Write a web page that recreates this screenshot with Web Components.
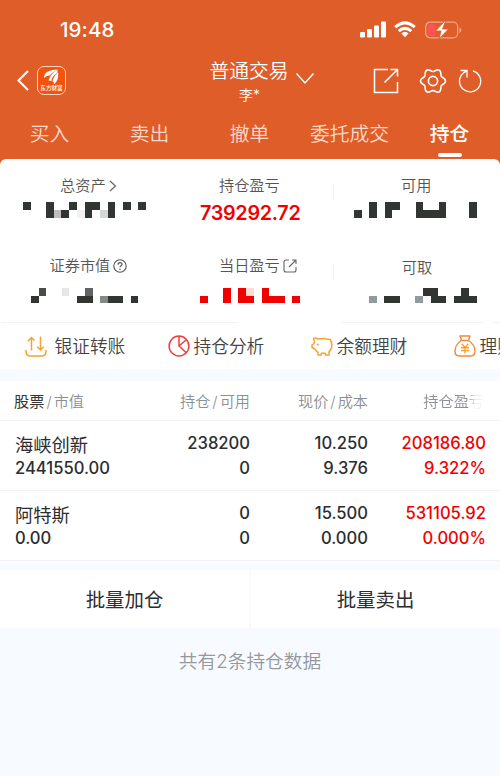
<!DOCTYPE html>
<html lang="zh-CN">
<head>
<meta charset="UTF-8">
<title>普通交易</title>
<style>
  html, body {
    margin: 0;
    height: 100%;
    background: #f7faff;
    overflow: hidden;
    font-family: Inter, 'Noto Sans CJK SC', sans-serif;
    color: #333;
  }
</style>
</head>
<body>
<trade-page></trade-page>

<script>
// six-lobed gear outline around (cx, cy)
function gearPath(cx, cy) {
  let d = '';
  for (let a = 0; a < 360; a += 6) {
    const t = a * Math.PI / 180;
    const r = 11 + 1.5 * Math.cos(6 * t);
    d += `${a ? 'L' : 'M'}${(cx + r * Math.cos(t)).toFixed(2)} ${(cy + r * Math.sin(t)).toFixed(2)}`;
  }
  return d + 'Z';
}

const ICONS = {
  back: [12, 22, '<path d="M11 1 1.500 10.500l9.500 9.500" stroke="#fff" stroke-width="2.200"/>'],
  down: [20, 13, '<path d="M1.500 1.500 10 11l8.500-9.500" stroke="#fff" stroke-width="1.400"/>'],
  share: [26, 26, '<path d="M15 1.500H1.500v23h23V14M11.500 14.500 24 2M17.500 1.500h7v7" stroke="#fff" stroke-width="1.500"/>'],
  gear: [28, 26, `<path d="${gearPath(14, 13)}" stroke="#fff" stroke-width="1.600" stroke-linejoin="round"/><circle cx="14" cy="13" r="4.600" stroke="#fff" stroke-width="1.600"/>`],
  refresh: [24, 24, '<path d="M15 2A10.600 10.600 0 1 1 5.500 3.900L9 1.700M2.500 1.500H9v7" stroke="#fff" stroke-width="1.300"/>'],
  signal: [26, 17, '<g fill="#fff"><rect y="11" width="5" height="5.500" rx="1"/><rect x="7" y="8" width="5" height="8.500" rx="1"/><rect x="14" y="4.500" width="5" height="12" rx="1"/><rect x="21" y=".5" width="5" height="16" rx="1"/></g>'],
  wifi: [22, 17, '<g stroke="#fff" stroke-width="3"><path d="M1.200 6.200Q11-2.500 20.800 6.200"/><path d="M4.700 10.200Q11 4.500 17.300 10.200"/></g><path d="M7.400 12.400Q11 9.300 14.600 12.400L11 16.200Z" fill="#fff"/>'],
  battery: [37, 18, '<rect x=".7" y="1.200" width="32" height="15.600" rx="4.500" stroke="#f0a98c" stroke-width="1.200"/><path d="M34.500 6.500v5.500q1.800-.8 1.800-2.750t-1.800-2.750" fill="#f0a98c"/><rect x="2.500" y="3" width="8" height="12" rx="2.500" fill="#ff5257"/><path d="M19.500.5 10.500 10h5.500l-2 8 9.500-10H17.500l3-7.500Z" fill="#fff" stroke="#de5d28" stroke-width=".9"/>'],
  more: [8, 12, '<path d="m1 1 5.500 5L1 11" stroke="#666" stroke-width="1.200"/>'],
  help: [14, 14, '<circle cx="7" cy="7" r="6.200" stroke="#555" stroke-width="1.100"/><path d="M5 5.700C5 3 9 3.100 9 5.300 9 6.800 7 6.700 7 8.300M7 9.700v1.200" stroke="#555" stroke-width="1.200"/>'],
  open: [14, 14, '<path d="M6 1H3Q1 1 1 3v8q0 2 2 2h8q2 0 2-2V8M6 8l6.500-6.500M9 1h4v4" stroke="#666" stroke-width="1.100"/>'],
  transfer: [22, 21, '<g stroke="#f9a12f" stroke-width="1.500"><path d="M1 14v1.500Q1 20 5.500 20h11Q21 20 21 15.500V14"/><path d="M6.500 14.500V1.500M2.800 5.200 6.500 1.500l3 3M15.500.5v13.500M12.300 10.800l3.200 3.200 3.200-3.200"/></g>'],
  pie: [22, 22, '<g stroke="#f03d3d" stroke-width="1.500"><circle cx="11" cy="11" r="9.900"/><path d="M11 1v10l7.500 7M11 11l7-6"/></g>'],
  pig: [22, 20, '<path d="M2.500 2.500Q5 1.500 7 3Q12 1.800 16 3L19.200 3.500Q21.500 7 20.500 12L18 16v3h-3.500l-.5-1.800h-3.500L10 19H7v-2.800Q4.500 15 3.800 13L1 11.500V9L3 7.500Q4 6 2.500 2.500Z" stroke="#f9a12f" stroke-width="1.500" stroke-linejoin="round"/><circle cx="6.800" cy="8.500" r="1" fill="#f9a12f"/>'],
  bag: [22, 22, '<g stroke="#f28a35" stroke-width="1.400" stroke-linejoin="round"><path d="M6 1h10l-1.500 4.500h-7ZM7.500 5.500Q1 9.500 1 16.500 1 21 5.500 21h11Q21 21 21 16.500 21 9.500 14.500 5.500Z"/><path d="m7.800 9 3.200 3.500L14.200 9M11 12.500V18.500M7 12.800h8M7 15.600h8" stroke="#f9a12f"/></g>']
};

// one svg glyph by name
class AppIcon extends HTMLElement {
  connectedCallback() {
    const [w, h, body] = ICONS[this.getAttribute('name')];
    this.attachShadow({ mode: 'open' }).innerHTML = `
      <style>
        :host { display: inline-block; flex: none; width: ${w}px; height: ${h}px; }
        svg { display: block; }
      </style>
      <svg width="${w}" height="${h}" viewBox="0 0 ${w} ${h}" fill="none">${body}</svg>`;
  }
}

// square orange brand badge
class BrandLogo extends HTMLElement {
  constructor() {
    super();
    this.attachShadow({ mode: 'open' }).innerHTML = `
      <style>
        :host {
          display: flex; flex-direction: column; align-items: center;
          box-sizing: border-box; width: 29px; height: 29px;
          border: 1px solid #ffd9c8; border-radius: 7px; background: #f4520f;
          color: #fff; overflow: hidden;
        }
        svg { display: block; margin-top: 2px; flex: none; }
        span { font: 500 5.600px/7px 'Noto Sans CJK SC', sans-serif; white-space: nowrap; }
      </style>
      <svg width="17" height="16" viewBox="0 0 17 16" fill="#fff">
        <path d="M1 9Q1 4 5 2.500 9 .5 15 .5 8 4 7 6.500 3.500 6 1 9Z"/>
        <path d="M5.500 11.500Q8 4 14.500 1 15.500 3 11 6.500 8.500 8.500 8.500 12Z"/>
        <path d="M9.500 12.500Q10 8 15 3 16.500 10 11 15.500 11.500 13 9.500 12.500Z"/>
      </svg>
      <span>东方财富</span>`;
  }
}

class StatusBar extends HTMLElement {
  constructor() {
    super();
    this.attachShadow({ mode: 'open' }).innerHTML = `
      <style>
        :host { display: flex; align-items: center; height: 60px; padding: 0 38px 0 60px; color: #fff; }
        time { flex: 1; font-size: 20.500px; font-weight: 500; line-height: 24px; letter-spacing: .1px; }
        .icons { display: flex; align-items: center; gap: 8px; padding-bottom: 1px; }
        app-icon:last-child { margin-left: 1px; }
      </style>
      <time>19:48</time>
      <div class="icons">
        <app-icon name="signal"></app-icon>
        <app-icon name="wifi"></app-icon>
        <app-icon name="battery"></app-icon>
      </div>`;
  }
}

class NavHeader extends HTMLElement {
  constructor() {
    super();
    this.attachShadow({ mode: 'open' }).innerHTML = `
      <style>
        :host {
          display: grid; grid-template-columns: 1fr auto 1fr; height: 50px;
          padding: 0 18px 0 17px; color: #fff;
        }
        .side { display: flex; align-items: center; height: 41px; }
        .left { gap: 8px; }
        .right { justify-content: flex-end; }
        .right app-icon:nth-child(1) { margin-right: 20px; }
        .right app-icon:nth-child(2) { margin-right: 11px; }
        .title { display: flex; align-items: center; gap: 6px; height: 22px; font-size: 19.800px; line-height: 24px; margin-left: 25px; }
        .title app-icon { margin-top: 14px; }
        .mid { font-weight: 350; }
        .user { font-size: 14px; line-height: 20px; margin-top: 3px; text-align: center; }
      </style>
      <div class="side left"><app-icon name="back"></app-icon><brand-logo></brand-logo></div>
      <div class="mid">
        <div class="title"><span>普通交易</span><app-icon name="down"></app-icon></div>
        <div class="user">李*</div>
      </div>
      <div class="side right">
        <app-icon name="share"></app-icon>
        <app-icon name="gear"></app-icon>
        <app-icon name="refresh"></app-icon>
      </div>`;
  }
}

class TabItem extends HTMLElement {
  constructor() {
    super();
    this.attachShadow({ mode: 'open' }).innerHTML = `
      <style>
        :host {
          display: flex; flex-direction: column; align-items: center;
          width: 100px; color: #ffd9c8; font-size: 19.800px; font-weight: 350; line-height: 28px;
        }
        :host([active]) { color: #fff; font-weight: 500; }
        i { display: none; width: 24px; height: 4px; margin-top: 5px; border-radius: 2px; background: #fff; }
        :host([active]) i { display: block; }
      </style>
      <slot></slot><i></i>`;
  }
}

class TabBar extends HTMLElement {
  constructor() {
    super();
    this.attachShadow({ mode: 'open' }).innerHTML = `
      <style>
        :host { display: flex; height: 39px; padding-top: 10px; margin-left: -.5px; }
      </style>
      <slot></slot>`;
  }
}

// two-row block mask hiding a value; each character is one cell
const MASK_COLORS = { '#': '#323633', a: '#4a4d4a', b: '#5f6462', c: '#858884', d: '#bfbdc0', e: '#d6d6d6', f: '#f5f0f3', g: '#e6e6e6', h: '#939a9d', r: '#f20000', p: '#ffdcd2' };

class PixelMask extends HTMLElement {
  connectedCallback() {
    const cell = 7.69;
    const h = Number(this.getAttribute('cell-height')) || 8;
    const rows = [this.getAttribute('upper'), this.getAttribute('lower')];
    let rects = '';
    rows.forEach((row, y) => {
      [...row].forEach((c, x) => {
        if (MASK_COLORS[c]) rects += `<rect x="${x * cell}" y="${y * h}" width="${cell}" height="${h}" fill="${MASK_COLORS[c]}"/>`;
      });
    });
    const w = Math.max(rows[0].length, rows[1].length) * cell;
    this.attachShadow({ mode: 'open' }).innerHTML = `
      <style>:host { display: block; } svg { display: block; }</style>
      <svg width="${w}" height="${h * 2}" shape-rendering="crispEdges">${rects}</svg>`;
  }
}

class StatCell extends HTMLElement {
  constructor() {
    super();
    this.attachShadow({ mode: 'open' }).innerHTML = `
      <style>
        :host { display: block; min-width: 0; }
        .label {
          display: flex; align-items: center; gap: 3px; box-sizing: border-box; height: 22px;
          padding-left: var(--label-x); padding-top: 2px;
          font-size: 15.200px; font-weight: 350; line-height: 22px; color: #555; white-space: nowrap;
        }
        .value { padding-left: var(--value-x); margin-top: var(--value-y, 6px); }
      </style>
      <div class="label"><slot name="label"></slot></div>
      <div class="value"><slot></slot></div>`;
  }
}

class AssetPanel extends HTMLElement {
  constructor() {
    super();
    this.attachShadow({ mode: 'open' }).innerHTML = `
      <style>
        :host { display: block; box-sizing: border-box; height: 164px; padding-top: 15px; background:
          linear-gradient(#f3f3f3, #f3f3f3) 1px 163px / 237px 1px no-repeat,
          linear-gradient(#f3f3f3, #f3f3f3) 342px 163px / 142px 1px no-repeat,
          linear-gradient(#f3f3f3, #f3f3f3) 492px 163px / 8px 1px no-repeat, #fff;
          border-radius: 6px 6px 0 0; }
        .row { display: grid; grid-template-columns: repeat(3, 1fr); height: 80px;
          background: linear-gradient(#f4f4f4, #f4f4f4) 333px 9px / 1px 17px no-repeat; }
        .low { padding-top: 2px; }
        b { display: block; font-size: 19.800px; font-weight: 600; line-height: 24px; letter-spacing: -.3px; color: #f20000; }
      </style>
      <div class="row">
        <stat-cell style="--label-x:60px; --value-x:23.070px">
          <span slot="label">总资产</span><app-icon slot="label" name="more"></app-icon>
          <pixel-mask upper="#..#..#.##.#.#.#" lower="...#d#.f#.e#"></pixel-mask>
        </stat-cell>
        <stat-cell style="--label-x:52.300px; --value-x:33.300px; --value-y:5px">
          <span slot="label">持仓盈亏</span><b>739292.72</b>
        </stat-cell>
        <stat-cell style="--label-x:67.700px; --value-x:20.500px">
          <span slot="label">可用</span>
          <pixel-mask upper="..#.##..#..#...#" lower="#.#.#...####...#" ></pixel-mask>
        </stat-cell>
      </div>
      <div class="row">
        <stat-cell style="--label-x:49.500px; --value-x:30.800px; --value-y:12px">
          <span slot="label">证券市值</span><app-icon slot="label" name="help"></app-icon>
          <pixel-mask cell-height="7.500" upper=".a..g..b" lower="#.....##.c##.#"></pixel-mask>
        </stat-cell>
        <stat-cell style="--label-x:52.300px; --value-x:33.300px; --value-y:12px">
          <span slot="label">当日盈亏</span><app-icon slot="label" name="open"></app-icon>
          <pixel-mask cell-height="7.500" upper="...r.rp.r" lower="r..r.rr.rrr.r"></pixel-mask>
        </stat-cell>
        <stat-cell class="low" style="--label-x:68.500px; --value-x:35.800px; --value-y:10px">
          <span slot="label">可取</span>
          <pixel-mask cell-height="7.500" upper=".......##...#" lower="h.##..h.##.###"></pixel-mask>
        </stat-cell>
      </div>`;
  }
}

class ToolLink extends HTMLElement {
  constructor() {
    super();
    this.attachShadow({ mode: 'open' }).innerHTML = `
      <style>
        :host {
          display: flex; flex: none; align-items: center; gap: var(--gap, 4px); width: 143px;
          font-size: 17.700px; font-weight: 350; line-height: 26px; color: #444; white-space: nowrap;
        }
        span { padding-top: 2px; }
      </style>
      <app-icon name="${this.getAttribute('icon')}"></app-icon><span><slot></slot></span>`;
  }
}

class ToolStrip extends HTMLElement {
  constructor() {
    super();
    this.attachShadow({ mode: 'open' }).innerHTML = `
      <style>
        :host { display: flex; height: 46px; padding-left: 24.500px; background: #fff; overflow: hidden; }
      </style>
      <slot></slot>`;
  }
}

class HoldingRow extends HTMLElement {
  constructor() {
    super();
    const cells = ['qty', 'avail', 'price', 'cost', 'gain', 'rate'].map(k => this.getAttribute(k));
    this.attachShadow({ mode: 'open' }).innerHTML = `
      <style>
        :host {
          display: grid; grid-template-columns: 135px 100px 118px 118px;
          box-sizing: border-box; height: 70px; padding: 10px 14px 0 15px;
          background: #fff; border-bottom: 1px solid #f3f3f3;
          font-size: 16.600px; font-weight: 500; line-height: 24.500px; color: #2b2d30;
        }
        .name { font-size: 18.300px; font-weight: 400; height: 24.500px; line-height: 28px; }
        .num { text-align: right; }
        .up { color: #f20000; }
      </style>
      <div><div class="name"><slot></slot></div>${this.getAttribute('value')}</div>
      <div class="num">${cells[0]}<br>${cells[1]}</div>
      <div class="num">${cells[2]}<br>${cells[3]}</div>
      <div class="num up">${cells[4]}<br>${cells[5]}</div>`;
  }
}

class HoldingTable extends HTMLElement {
  constructor() {
    super();
    this.attachShadow({ mode: 'open' }).innerHTML = `
      <style>
        :host { display: block; margin-top: 12px; }
        .head {
          display: grid; grid-template-columns: 136px 100px 118px 116px;
          box-sizing: border-box; height: 40px; padding: 0 14px;
          background: #fff; border-bottom: 1px solid #f3f3f3;
          font-size: 15.200px; font-weight: 350; line-height: 41px; color: #8c8f94; white-space: nowrap;
        }
        .head div + div { text-align: right; }
        b { font-weight: 400; color: #333; }
        i { font-style: normal; margin: 0 2px; }
        .fade { -webkit-mask-image: linear-gradient(90deg, #000 100px, rgba(0, 0, 0, .2) 107px, transparent 120px); mask-image: linear-gradient(90deg, #000 100px, rgba(0, 0, 0, .2) 107px, transparent 120px); }
      </style>
      <div class="head">
        <div><b>股票</b><i>/</i>市值</div>
        <div>持仓<i>/</i>可用</div>
        <div>现价<i>/</i>成本</div>
        <div class="fade">持仓盈亏</div>
      </div>
      <slot></slot>`;
  }
}

class BatchActions extends HTMLElement {
  constructor() {
    super();
    this.attachShadow({ mode: 'open' }).innerHTML = `
      <style>
        :host { display: grid; grid-template-columns: 1fr 1fr; gap: 2px; margin-top: 9px; }
        ::slotted(span) {
          height: 58px; background: #fff; color: #2b2d30;
          font-size: 19.400px; line-height: 61px; text-align: center;
        }
      </style>
      <slot></slot>`;
  }
}

class TradePage extends HTMLElement {
  constructor() {
    super();
    this.attachShadow({ mode: 'open' }).innerHTML = `
      <style>
        :host { display: block; }
        .top { height: 159px; padding-bottom: 8px; margin-bottom: -8px; background: #de5d28; }
        footer { margin-top: 20px; text-align: center; font-size: 18.700px; font-weight: 350; line-height: 28px; color: #94979b; }
      </style>
      <div class="top">
        <status-bar></status-bar>
        <nav-header></nav-header>
        <tab-bar>
          <tab-item>买入</tab-item>
          <tab-item>卖出</tab-item>
          <tab-item>撤单</tab-item>
          <tab-item>委托成交</tab-item>
          <tab-item active>持仓</tab-item>
        </tab-bar>
      </div>
      <asset-panel></asset-panel>
      <tool-strip>
        <tool-link icon="transfer" style="--gap:8px">银证转账</tool-link>
        <tool-link icon="pie">持仓分析</tool-link>
        <tool-link icon="pig">余额理财</tool-link>
        <tool-link icon="bag">理财</tool-link>
      </tool-strip>
      <holding-table>
        <holding-row value="2441550.00" qty="238200" avail="0" price="10.250" cost="9.376" gain="208186.80" rate="9.322%">海峡创新</holding-row>
        <holding-row value="0.00" qty="0" avail="0" price="15.500" cost="0.000" gain="531105.92" rate="0.000%">阿特斯</holding-row>
      </holding-table>
      <batch-actions><span>批量加仓</span><span>批量卖出</span></batch-actions>
      <footer>共有2条持仓数据</footer>`;
  }
}

customElements.define('app-icon', AppIcon);
customElements.define('brand-logo', BrandLogo);
customElements.define('status-bar', StatusBar);
customElements.define('nav-header', NavHeader);
customElements.define('tab-item', TabItem);
customElements.define('tab-bar', TabBar);
customElements.define('pixel-mask', PixelMask);
customElements.define('stat-cell', StatCell);
customElements.define('asset-panel', AssetPanel);
customElements.define('tool-link', ToolLink);
customElements.define('tool-strip', ToolStrip);
customElements.define('holding-row', HoldingRow);
customElements.define('holding-table', HoldingTable);
customElements.define('batch-actions', BatchActions);
customElements.define('trade-page', TradePage);
</script>
</body>
</html>
